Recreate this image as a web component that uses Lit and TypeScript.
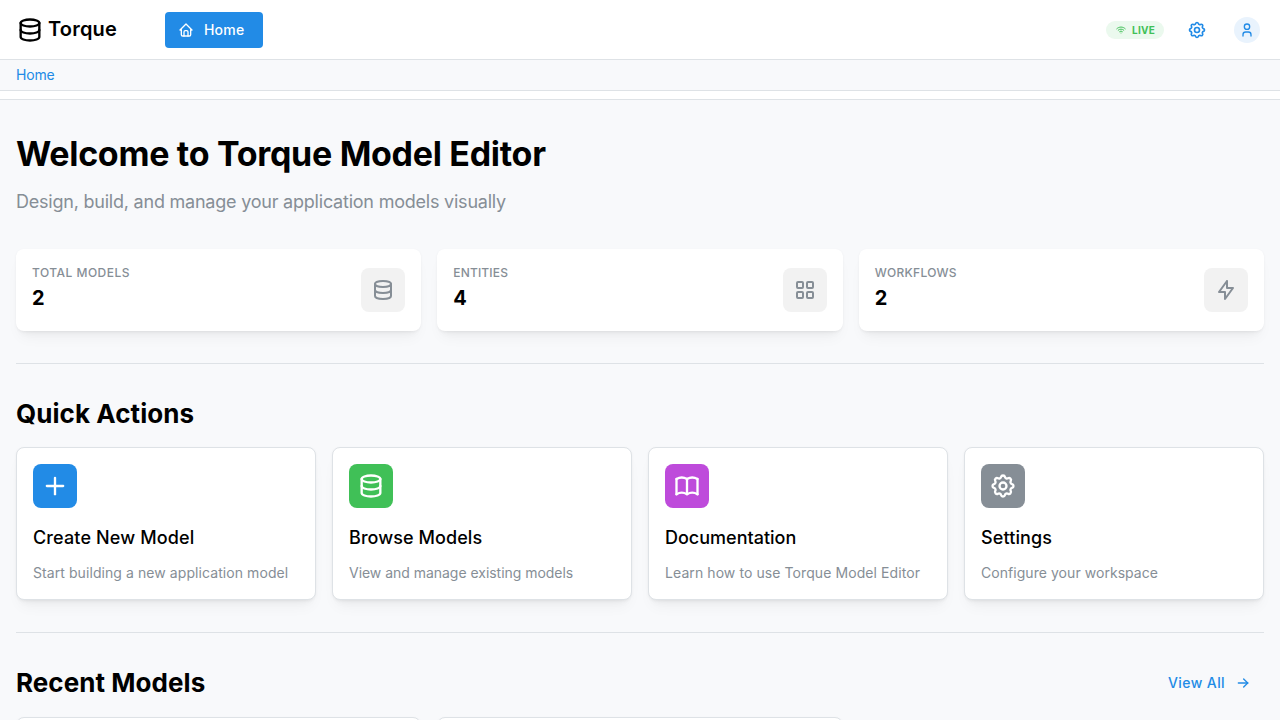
import { LitElement, html, css, svg } from "lit";
import { customElement, property } from "lit/decorators.js";
import { styleMap } from "lit/directives/style-map.js";

const ICONS: Record<string, string[]> = {
  database: [
    "M4 6a8 3 0 1 0 16 0a8 3 0 1 0 -16 0",
    "M4 6v6a8 3 0 0 0 16 0v-6",
    "M4 12v6a8 3 0 0 0 16 0v-6",
  ],
  home: [
    "M5 12l-2 0l9 -9l9 9l-2 0",
    "M5 12v7a2 2 0 0 0 2 2h10a2 2 0 0 0 2 -2v-7",
    "M9 21v-6a2 2 0 0 1 2 -2h2a2 2 0 0 1 2 2v6",
  ],
  wifi: [
    "M12 18l.01 0",
    "M9.172 15.172a4 4 0 0 1 5.656 0",
    "M6.343 12.343a8 8 0 0 1 11.314 0",
    "M3.515 9.515c4.686 -4.687 12.284 -4.687 17 0",
  ],
  settings: [
    "M10.325 4.317c.426 -1.756 2.924 -1.756 3.35 0a1.724 1.724 0 0 0 2.573 1.066c1.543 -.94 3.31 .826 2.37 2.37a1.724 1.724 0 0 0 1.065 2.572c1.756 .426 1.756 2.924 0 3.35a1.724 1.724 0 0 0 -1.066 2.573c.94 1.543 -.826 3.31 -2.37 2.37a1.724 1.724 0 0 0 -2.572 1.065c-.426 1.756 -2.924 1.756 -3.35 0a1.724 1.724 0 0 0 -2.573 -1.066c-1.543 .94 -3.31 -.826 -2.37 -2.37a1.724 1.724 0 0 0 -1.065 -2.572c-1.756 -.426 -1.756 -2.924 0 -3.35a1.724 1.724 0 0 0 1.066 -2.573c-.94 -1.543 .826 -3.31 2.37 -2.37c1 .608 2.296 .07 2.572 -1.065z",
    "M9 12a3 3 0 1 0 6 0a3 3 0 0 0 -6 0",
  ],
  user: [
    "M8 7a4 4 0 1 0 8 0a4 4 0 0 0 -8 0",
    "M6 21v-2a4 4 0 0 1 4 -4h4a4 4 0 0 1 4 4v2",
  ],
  grid: [
    "M5 4h4a1 1 0 0 1 1 1v4a1 1 0 0 1 -1 1h-4a1 1 0 0 1 -1 -1v-4a1 1 0 0 1 1 -1",
    "M15 4h4a1 1 0 0 1 1 1v4a1 1 0 0 1 -1 1h-4a1 1 0 0 1 -1 -1v-4a1 1 0 0 1 1 -1",
    "M5 14h4a1 1 0 0 1 1 1v4a1 1 0 0 1 -1 1h-4a1 1 0 0 1 -1 -1v-4a1 1 0 0 1 1 -1",
    "M15 14h4a1 1 0 0 1 1 1v4a1 1 0 0 1 -1 1h-4a1 1 0 0 1 -1 -1v-4a1 1 0 0 1 1 -1",
  ],
  bolt: ["M13 3l0 7l6 0l-8 11l0 -7l-6 0l8 -11"],
  plus: ["M12 5l0 14", "M5 12l14 0"],
  book: [
    "M3 19a9 9 0 0 1 9 0a9 9 0 0 1 9 0",
    "M3 6a9 9 0 0 1 9 0a9 9 0 0 1 9 0",
    "M3 6l0 13",
    "M12 6l0 13",
    "M21 6l0 13",
  ],
  arrow: ["M5 12l14 0", "M13 18l6 -6", "M13 6l6 6"],
};

@customElement("line-icon")
export class LineIcon extends LitElement {
  @property() name = "";
  @property({ type: Number }) size = 24;

  static styles = css`
    :host {
      display: block;
      flex: none;
    }
    svg {
      display: block;
    }
  `;

  render() {
    return html`<svg
      width=${this.size}
      height=${this.size}
      viewBox="0 0 24 24"
      fill="none"
      stroke="currentColor"
      stroke-width="2"
      stroke-linecap="round"
      stroke-linejoin="round"
    >
      ${(ICONS[this.name] ?? []).map((d) => svg`<path d=${d}></path>`)}
    </svg>`;
  }
}

// The tracking fields are letter spacings in pixels.
const STATS = [
  { label: "Total Models", value: 2, icon: "database", tracking: 0.48 },
  { label: "Entities", value: 4, icon: "grid", tracking: 0.15 },
  { label: "Workflows", value: 2, icon: "bolt", tracking: 0.3 },
];

const ACTIONS = [
  {
    title: "Create New Model",
    text: "Start building a new application model",
    icon: "plus",
    tone: "blue",
    titleTracking: 0.13,
    textTracking: 0.075,
  },
  {
    title: "Browse Models",
    text: "View and manage existing models",
    icon: "database",
    tone: "green",
    titleTracking: 0.07,
    textTracking: -0.03,
  },
  {
    title: "Documentation",
    text: "Learn how to use Torque Model Editor",
    icon: "book",
    tone: "grape",
    titleTracking: 0,
    textTracking: 0.083,
  },
  {
    title: "Settings",
    text: "Configure your workspace",
    icon: "settings",
    tone: "gray",
    titleTracking: 0.12,
    textTracking: 0.05,
  },
];

const tracked = (px: number) => styleMap({ letterSpacing: `${px}px` });

@customElement("app-root")
export class AppRoot extends LitElement {
  static styles = css`
    :host {
      display: block;
      height: 100vh;
      overflow: hidden;
      background: #f8f9fb;
      color: #000;
      font-family: Inter, sans-serif;
      font-size: 16px;
      line-height: 1.55;
    }
    * {
      box-sizing: border-box;
    }
    h1,
    h2,
    p {
      margin: 0;
    }
    .header {
      height: 100px;
      background: #fff;
      border-bottom: 1px solid #dee2e6;
    }
    .topbar {
      height: 60px;
      display: flex;
      align-items: center;
      justify-content: space-between;
      padding: 0 20px 0 16px;
      border-bottom: 1px solid #dee2e6;
    }
    .left,
    .right,
    .brand {
      display: flex;
      align-items: center;
    }
    .left {
      gap: 48px;
    }
    .brand {
      gap: 4px;
      width: 101px;
      font-size: 20px;
      font-weight: 600;
      letter-spacing: 0.2px;
      line-height: 26px;
      padding-bottom: 1px;
    }
    .brand line-icon {
      margin-bottom: -1px;
    }
    .nav {
      display: flex;
      align-items: center;
      gap: 10px;
      width: 98px;
      height: 36px;
      padding-left: 13px;
      border-radius: 4px;
      background: #228be6;
      color: #fff;
      font-size: 14px;
      font-weight: 500;
      letter-spacing: 0.2px;
      line-height: 1;
    }
    .badge {
      display: flex;
      align-items: center;
      gap: 5px;
      width: 58px;
      height: 18px;
      padding: 0 9px;
      border-radius: 9px;
      background: #ebf9ee;
      color: #40c057;
      font-size: 10px;
      font-weight: 700;
      letter-spacing: 0.25px;
      line-height: 16px;
    }
    .gear {
      margin-left: 23px;
      color: #228be6;
    }
    .avatar {
      display: grid;
      place-items: center;
      width: 26px;
      height: 26px;
      margin-left: 27px;
      border-radius: 50%;
      background: #e9f3fd;
      color: #228be6;
    }
    .crumbs {
      height: 31px;
      display: flex;
      align-items: center;
      padding: 0 16px;
      background: #f8f9fb;
      border-bottom: 1px solid #dee2e6;
      color: #228be6;
      font-size: 14px;
      letter-spacing: -0.2px;
      line-height: 1;
    }
    .main {
      padding: 32px 16px;
    }
    h1 {
      font-size: 34px;
      font-weight: 700;
      letter-spacing: -0.3px;
      line-height: 1.3;
    }
    .lead {
      margin-top: 12px;
      color: #868e96;
      font-size: 18px;
      letter-spacing: -0.222px;
    }
    .stats,
    .models {
      display: grid;
      grid-template-columns: repeat(3, 1fr);
      gap: 16px;
    }
    .stats {
      margin-top: 32.6px;
    }
    .stat,
    .card {
      background: #fff;
      border-radius: 8px;
      padding: 16px;
      box-shadow: 0 1px 3px rgba(0, 0, 0, 0.05),
        0 10px 15px -5px rgba(0, 0, 0, 0.05),
        0 7px 7px -5px rgba(0, 0, 0, 0.04);
    }
    .stat {
      display: flex;
      align-items: center;
      justify-content: space-between;
    }
    .label {
      color: #868e96;
      font-size: 12px;
      font-weight: 500;
      line-height: 15px;
      text-transform: uppercase;
    }
    .value {
      padding: 2.9px 0 1px;
      font-size: 20px;
      font-weight: 700;
      line-height: 31px;
    }
    .tile {
      display: grid;
      place-items: center;
      width: 44px;
      height: 44px;
      border-radius: 8px;
      color: #fff;
    }
    .soft {
      background: #f2f2f2;
      color: #868e96;
    }
    .blue {
      background: #228be6;
    }
    .green {
      background: #40c057;
    }
    .grape {
      background: #be4bdb;
    }
    .gray {
      background: #868e96;
    }
    .rule {
      height: 1px;
      margin: 32px 0;
      background: #dee2e6;
    }
    h2 {
      font-size: 26px;
      font-weight: 700;
      letter-spacing: 0.06px;
      line-height: 1.35;
    }
    .actions {
      display: grid;
      grid-template-columns: repeat(4, 1fr);
      gap: 16px;
      margin-top: 16px;
    }
    .card {
      border: 1px solid #dee2e6;
    }
    .title {
      margin-top: 16px;
      font-size: 18px;
      font-weight: 500;
    }
    .text {
      margin-top: 10px;
      color: #868e96;
      font-size: 14px;
    }
    .row {
      display: flex;
      align-items: center;
      justify-content: space-between;
      height: 36px;
    }
    .row h2 {
      padding-bottom: 1px;
    }
    .viewall {
      display: flex;
      align-items: center;
      gap: 10px;
      height: 36px;
      padding-right: 13px;
      color: #228be6;
      font-size: 14px;
      font-weight: 500;
      letter-spacing: 0.4px;
      line-height: 1;
    }
    .models {
      margin-top: 16px;
    }
    .model {
      height: 160px;
    }
  `;

  render() {
    return html`
      <header class="header">
        <div class="topbar">
          <div class="left">
            <div class="brand"><line-icon name="database" size="28"></line-icon><span>Torque</span></div>
            <div class="nav"><line-icon name="home" size="16"></line-icon><span>Home</span></div>
          </div>
          <div class="right">
            <div class="badge"><line-icon name="wifi" size="12"></line-icon><span>LIVE</span></div>
            <line-icon class="gear" name="settings" size="20"></line-icon>
            <div class="avatar"><line-icon name="user" size="16"></line-icon></div>
          </div>
        </div>
        <nav class="crumbs"><span>Home</span></nav>
      </header>
      <main class="main">
        <h1>Welcome to Torque Model Editor</h1>
        <p class="lead">Design, build, and manage your application models visually</p>
        <section class="stats">
          ${STATS.map(
            (s) => html`<div class="stat">
              <div>
                <div class="label" style=${tracked(s.tracking)}>${s.label}</div>
                <div class="value">${s.value}</div>
              </div>
              <div class="tile soft"><line-icon name=${s.icon} size="24"></line-icon></div>
            </div>`
          )}
        </section>
        <div class="rule"></div>
        <h2>Quick Actions</h2>
        <section class="actions">
          ${ACTIONS.map(
            (a) => html`<div class="card">
              <div class="tile ${a.tone}"><line-icon name=${a.icon} size="28"></line-icon></div>
              <p class="title" style=${tracked(a.titleTracking)}>${a.title}</p>
              <p class="text" style=${tracked(a.textTracking)}>${a.text}</p>
            </div>`
          )}
        </section>
        <div class="rule"></div>
        <div class="row">
          <h2>Recent Models</h2>
          <div class="viewall"><span>View All</span><line-icon name="arrow" size="16"></line-icon></div>
        </div>
        <section class="models">
          <div class="card model"></div>
          <div class="card model"></div>
        </section>
      </main>
    `;
  }
}
